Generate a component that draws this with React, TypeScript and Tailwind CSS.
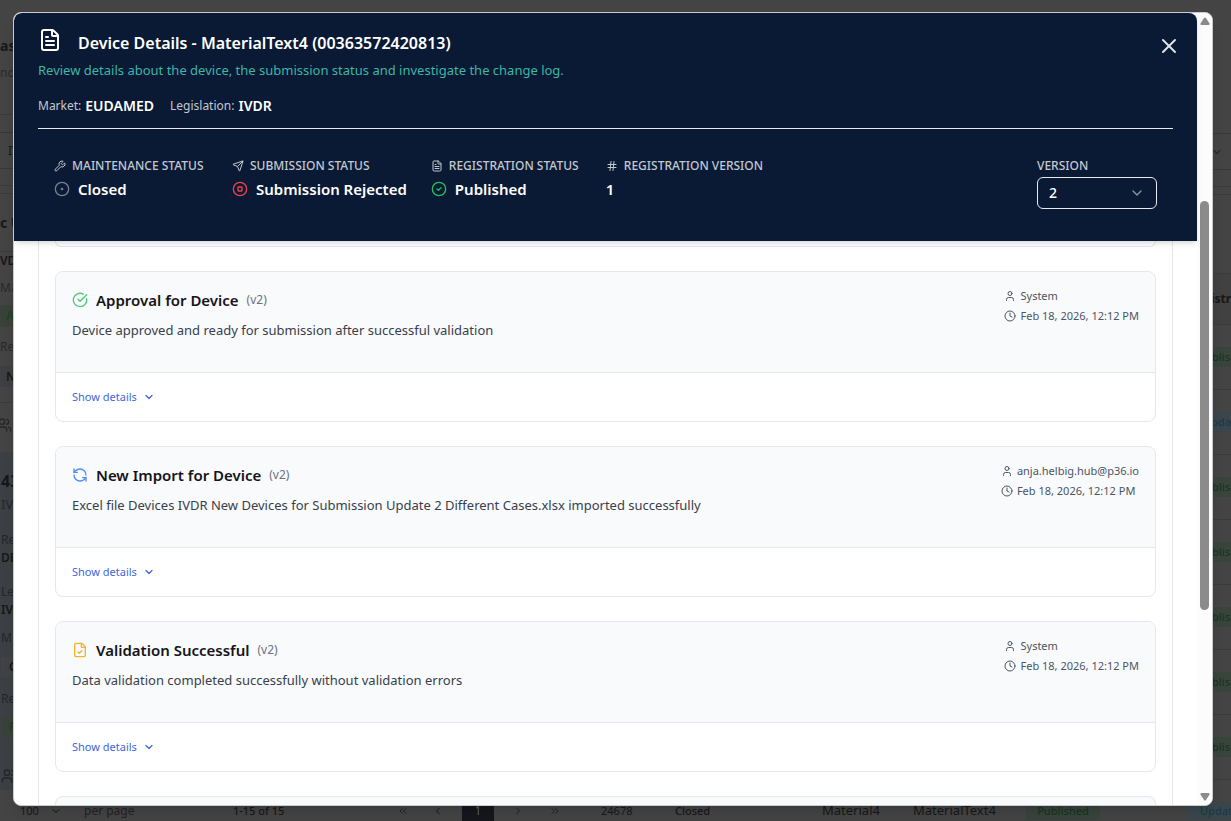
import { useState } from "react";
import type { ReactNode } from "react";
import {
  ChevronDown,
  ChevronLeft,
  ChevronRight,
  ChevronsLeft,
  ChevronsRight,
  CircleCheck,
  CircleCheckBig,
  CircleStop,
  Clock,
  FileCheck,
  FileText,
  Hash,
  RefreshCcw,
  Send,
  User,
  Users,
  Wrench,
  X,
} from "lucide-react";

type LogEntry = {
  title: string;
  version: string;
  text: string;
  user: string;
  date: string;
  icon: ReactNode;
};

const entries: LogEntry[] = [
  {
    title: "Approval for Device",
    version: "(v2)",
    text: "Device approved and ready for submission after successful validation",
    user: "System",
    date: "Feb 18, 2026, 12:12 PM",
    icon: <CircleCheckBig className="size-4 text-[#4fc878]" />,
  },
  {
    title: "New Import for Device",
    version: "(v2)",
    text: "Excel file Devices IVDR New Devices for Submission Update 2 Different Cases.xlsx imported successfully",
    user: "anja.helbig.hub@p36.io",
    date: "Feb 18, 2026, 12:12 PM",
    icon: <RefreshCcw className="size-4 text-[#4f8cf5]" />,
  },
  {
    title: "Validation Successful",
    version: "(v2)",
    text: "Data validation completed successfully without validation errors",
    user: "System",
    date: "Feb 18, 2026, 12:12 PM",
    icon: <FileCheck className="size-4 text-[#f2b42e]" />,
  },
];

const railRows: { text: ReactNode; row: string }[] = [
  { text: "as", row: "h-8 mt-[30px] text-sm font-bold" },
  { text: "nd", row: "h-5 mt-px text-xs text-[#2a2a2a]" },
  { text: "", row: "h-8 border-b border-[#3b3b3b]" },
  { text: "", row: "h-[18px] border-b border-[#383838]" },
  { text: "IV", row: "h-9 border-b border-[#383838] pl-2 text-xs" },
  { text: "", row: "h-[17px] border-b border-[#3b3b3b]" },
  { text: "", row: "h-2 border-b border-[#3b3b3b]" },
  { text: "c U", row: "h-[58px] border-b border-[#3b3b3b] text-sm font-bold" },
  { text: "VD", row: "h-[18px] text-xs font-semibold" },
  { text: "Ma", row: "h-[35px] text-xs text-[#292929]" },
  { text: "A", row: "h-[22px] bg-[#394239] pl-[6px] text-xs font-semibold text-[#1b4327]" },
  { text: "Reg", row: "h-[39px] text-xs text-[#292929]" },
  { text: "N", row: "h-[21px] bg-[#3e3f42] pl-[6px] text-xs font-semibold" },
  { text: "", row: "h-4 border-b border-[#3b3b3b]" },
  { text: <Users className="size-4 shrink-0 text-[#262626]" />, row: "h-11 mb-[5px] -ml-1" },
];

const railDetail: { text: ReactNode; row: string }[] = [
  { text: "43", row: "h-8 mt-[13px] text-base font-bold" },
  { text: "IV", row: "h-4 text-[13px] text-[#23262b]" },
  { text: "Re", row: "h-4 mt-[19px] text-xs text-[#23262b]" },
  { text: "DE", row: "h-4 mt-[2px] text-xs font-semibold" },
  { text: "Le", row: "h-4 mt-[18px] text-xs text-[#23262b]" },
  { text: "IV", row: "h-4 mt-[2px] text-xs font-semibold" },
  { text: "M", row: "h-4 mt-3 text-xs text-[#23262b]" },
  { text: "C", row: "h-5 mt-[11px] bg-[#404245] pl-2 text-xs font-semibold" },
  { text: "Re", row: "h-5 mt-3 text-xs text-[#23262b]" },
  { text: "P", row: "h-5 mt-2 bg-[#394239] pl-2 text-xs font-semibold text-[#163f23]" },
  { text: <Users className="size-4 shrink-0 text-[#23262b]" />, row: "h-5 mt-[29px]" },
];

const rowStatuses = ["blis", "pdat", "blis", "blis", "blis", "blis", "blis"];

function DeviceListPage() {
  return (
    <div className="flex h-full flex-col overflow-hidden bg-[#444444] text-[#171717]" aria-hidden="true">
      <div className="flex min-h-0 flex-1 justify-between overflow-hidden">
        <div className="flex w-14 flex-col overflow-hidden">
          {railRows.map((r, i) => (
            <div key={i} className={`flex shrink-0 items-center whitespace-nowrap ${r.row}`}>
              {r.text}
            </div>
          ))}
          <div className="h-[338px] shrink-0 bg-[#3c4045] pl-px">
            {railDetail.map((r, i) => (
              <div key={i} className={`flex items-center ${r.row}`}>
                {r.text}
              </div>
            ))}
          </div>
        </div>
        <div className="w-5 overflow-hidden text-xs">
          <div className="h-[134px] border-b border-[#383838]" />
          <div className="flex h-9 items-center border-b border-[#383838]">
            <ChevronDown className="size-3" />
          </div>
          <div className="h-[17px] border-b border-[#3b3b3b]" />
          <div className="h-2 border-b border-[#3b3b3b]" />
          <div className="h-[79px] border-b border-[#3b3b3b]" />
          <div className="flex h-[51px] items-center border-b border-[#3b3b3b] bg-[#414141] font-bold">istr</div>
          {rowStatuses.map((s, i) => (
            <div key={i} className="flex h-[65px] items-center border-b border-[#3b3b3b]">
              <span
                className={
                  s === "pdat"
                    ? "w-full bg-[#39474d] py-[3px] text-[11px] font-medium text-[#1b3949]"
                    : "w-full bg-[#39443d] py-[3px] pl-px text-[11px] font-medium text-[#17351f]"
                }
              >
                {s}
              </span>
            </div>
          ))}
        </div>
      </div>
      <div className="grid h-5 shrink-0 grid-cols-[50px_34px_149px_164px_35px_30px_50px_37px_50px_74px_147px_91px_115px_162px_1fr] items-center text-xs whitespace-nowrap">
        <span className="pl-5 text-[11px]">100</span>
        <ChevronDown className="size-3" />
        <span className="text-[#222222]">per page</span>
        <span className="text-[11px] font-medium">1-15 of 15</span>
        <ChevronsLeft className="size-3 text-[#222222]" />
        <ChevronLeft className="size-3" />
        <span className="w-8 bg-[#15171c] py-[2px] text-center text-[#55606a]">1</span>
        <ChevronRight className="size-3 text-[#222222]" />
        <ChevronsRight className="size-3 text-[#222222]" />
        <span className="pl-[2px] text-[11px]">24678</span>
        <span className="pl-[2px] text-[11px] font-medium">Closed</span>
        <span className="pl-[2px] text-[13px]">Material4</span>
        <span className="pl-[2px] text-[13px]">MaterialText4</span>
        <span className="w-[74px] bg-[#39443d] py-[2px] text-center text-[11px] font-medium text-[#17351f]">Published</span>
        <span className="bg-[#39474d] py-[2px] pl-3 text-[11px] font-medium text-[#1b3949]">Updat</span>
      </div>
    </div>
  );
}

function Stat({
  icon,
  label,
  valueIcon,
  value,
  width,
}: {
  icon: ReactNode;
  label: string;
  valueIcon?: ReactNode;
  value: string;
  width: string;
}) {
  return (
    <div className={`flex flex-col gap-[3px] ${width}`}>
      <div className="flex h-4 items-center gap-[6px] text-xs font-medium text-[#c3c8d0]">
        {icon}
        {label}
      </div>
      <div className="flex h-6 items-center gap-2 text-[15px] font-semibold text-white">
        {valueIcon}
        {value}
      </div>
    </div>
  );
}

function ClosedIcon() {
  return (
    <svg viewBox="0 0 24 24" className="size-4 text-[#75808f]" fill="none" stroke="currentColor" strokeWidth="2">
      <circle cx="12" cy="12" r="10" />
      <circle cx="12" cy="12" r="1" />
    </svg>
  );
}

function DialogHeader({ version, onVersion }: { version: string; onVersion: (v: string) => void }) {
  return (
    <header className="relative z-10 rounded-t-lg bg-[#0a1a35] px-6 pt-[15px] shadow-md">
      <div className="flex items-start gap-4">
        <FileText className="size-6 text-white" />
        <h2 className="text-base leading-[30px] font-semibold text-white">Device Details - MaterialText4 (00363572420813)</h2>
      </div>
      <p className="mt-[2px] text-[13px] leading-5 text-[#3fb5a3]">
        Review details about the device, the submission status and investigate the change log.
      </p>
      <div className="mt-4 flex gap-4 border-b border-[#e8eaee] pb-3 text-xs leading-5 text-[#c3c8d0]">
        <div className="flex items-center gap-1">
          Market: <b className="text-sm leading-5 font-semibold text-white">EUDAMED</b>
        </div>
        <div className="flex items-center gap-1">
          Legislation: <b className="text-sm leading-5 font-semibold text-white">IVDR</b>
        </div>
      </div>
      <button type="button" aria-label="Close" className="absolute top-[21px] right-4 text-[#dfe3e8]">
        <X className="size-6" />
      </button>
      <div className="flex justify-between px-4 pt-[29px] pb-8">
        <div className="flex gap-6">
          <Stat
            icon={<Wrench className="size-3" />}
            label="MAINTENANCE STATUS"
            valueIcon={<ClosedIcon />}
            value="Closed"
            width="min-w-[154px]"
          />
          <Stat
            icon={<Send className="size-3" />}
            label="SUBMISSION STATUS"
            valueIcon={<CircleStop className="size-4 text-[#f0414b]" />}
            value="Submission Rejected"
            width="min-w-[173px]"
          />
          <Stat
            icon={<FileText className="size-3" />}
            label="REGISTRATION STATUS"
            valueIcon={<CircleCheck className="size-4 text-[#1fc15c]" />}
            value="Published"
            width="min-w-[151px]"
          />
          <Stat icon={<Hash className="size-3" />} label="REGISTRATION VERSION" value="1" width="min-w-[160px]" />
        </div>
        <div className="flex w-[120px] flex-col gap-[3px]">
          <label htmlFor="version" className="text-xs leading-4 font-medium text-[#c3c8d0]">
            VERSION
          </label>
          <div className="relative">
            <select
              id="version"
              value={version}
              onChange={(e) => onVersion(e.target.value)}
              className="h-8 w-full appearance-none rounded-md border border-[#e8eaee] bg-transparent px-[11px] text-sm font-medium text-white"
            >
              <option value="2">2</option>
              <option value="1">1</option>
            </select>
            <ChevronDown className="pointer-events-none absolute top-2 right-3 size-4 text-[#8b95a5]" />
          </div>
        </div>
      </div>
    </header>
  );
}

function LogCard({ entry }: { entry: LogEntry }) {
  return (
    <article className="shrink-0 overflow-hidden rounded-lg border border-[#e5e7eb] bg-white">
      <div className="flex items-start justify-between border-b border-[#e5e7eb] bg-[#f9fafb] px-4 pt-4 pb-8">
        <div>
          <div className="flex h-6 items-center gap-2">
            {entry.icon}
            <h3 className="text-[15px] font-semibold text-[#151518]">{entry.title}</h3>
            <span className="text-xs text-[#6b7280]">{entry.version}</span>
          </div>
          <p className="mt-2 text-[13px] leading-5 text-[#38404b]">{entry.text}</p>
        </div>
        <div className="flex flex-col gap-1 text-[11px] leading-4 text-[#4b5563]">
          <span className="flex items-center gap-1">
            <span className="flex w-3 justify-center">
              <User className="size-3" />
            </span>
            {entry.user}
          </span>
          <span className="flex items-center gap-1">
            <Clock className="size-3" />
            {entry.date}
          </span>
        </div>
      </div>
      <button type="button" className="flex items-center gap-[6px] p-4 text-[11px] leading-4 text-[#3f66dd]">
        Show details
        <ChevronDown className="size-3" strokeWidth={2.5} />
      </button>
    </article>
  );
}

function ScrollBar() {
  return (
    <div className="flex w-[15px] flex-col items-center bg-[#fcfcfc] py-1" aria-hidden="true">
      <svg viewBox="0 0 10 8" className="h-2 w-[10px] fill-[#8b8b8b]">
        <path d="M4 1Q5 0 6 1L9.5 6.5Q10 8 8.5 8H1.5Q0 8 .5 6.5Z" />
      </svg>
      <div className="grow-[176]" />
      <div className="w-[9px] grow-[408] rounded-full bg-[#8b8b8b]" />
      <div className="grow-[183]" />
      <svg viewBox="0 0 10 8" className="h-2 w-[10px] fill-[#8b8b8b]">
        <path d="M4 7Q5 8 6 7L9.5 1.5Q10 0 8.5 0H1.5Q0 0 .5 1.5Z" />
      </svg>
    </div>
  );
}

export default function App() {
  const [version, setVersion] = useState("2");
  return (
    <div className="relative h-screen overflow-hidden font-['Noto_Sans',sans-serif]">
      <DeviceListPage />
      <div
        role="dialog"
        aria-label="Device Details"
        className="absolute top-3 right-[18px] bottom-[15px] left-[13px] flex overflow-hidden rounded-lg border border-[#c9cbce] bg-white shadow-lg"
      >
        <div className="flex min-w-0 flex-1 flex-col">
          <DialogHeader version={version} onVersion={setVersion} />
          <div className="min-h-0 flex-1 overflow-hidden px-6">
            <div className="flex flex-col gap-6 border-x border-[#e5e7eb] px-4">
              <div className="h-[6px] shrink-0 rounded-b-lg border-x border-b border-[#e5e7eb]" />
              {entries.map((e) => (
                <LogCard key={e.title} entry={e} />
              ))}
              <div className="h-12 shrink-0 rounded-t-lg border-x border-t border-[#e5e7eb] bg-[#f9fafb]" />
            </div>
          </div>
        </div>
        <ScrollBar />
      </div>
    </div>
  );
}
